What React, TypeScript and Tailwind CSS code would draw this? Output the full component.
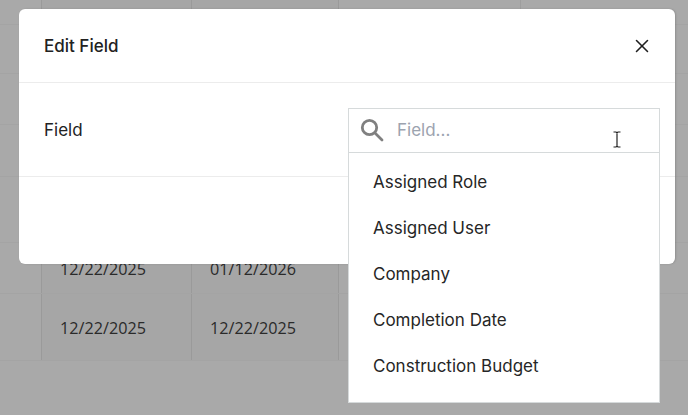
import { X } from 'lucide-react';

const font = "font-['Inter',sans-serif]";

const rows = [
  { h: 'h-[25px]', a: '', b: '' },
  { h: 'h-[49px]', a: '', b: '' },
  { h: 'h-[51px]', a: '', b: '' },
  { h: 'h-[52px]', a: '', b: '' },
  { h: 'h-[66px]', a: '', b: '' },
  { h: 'h-[51px]', a: '12/22/2025', b: '01/12/2026' },
  { h: 'h-[67px]', a: '12/22/2025', b: '12/22/2025' },
];

const options = ['Assigned Role', 'Assigned User', 'Company', 'Completion Date', 'Construction Budget'];

export default function App() {
  return (
    <div className="relative h-[415px] w-[688px] overflow-hidden bg-[#a9a9a9]">
      {/* table behind the overlay */}
      <div className="font-['Open_Sans',sans-serif] text-[16.2px] text-[#2a2a2a]">
        {rows.map((row, index) => (
          <div key={index} className={`flex ${row.h} border-b border-[#a4a4a4]`}>
            <div className="w-[42px] border-r border-[#9a9a9a]" />
            <div className="flex w-[150px] items-center border-r border-[#9a9a9a] bg-[#a6a6a6] pl-[18px] pt-[3px]">{row.a}</div>
            <div className="flex w-[147px] items-center border-r border-[#9a9a9a] bg-[#a6a6a6] pl-[18px] pt-[3px]">{row.b}</div>
            <div className="w-[182px] border-r border-[#9e9e9e]" />
          </div>
        ))}
      </div>

      {/* modal */}
      <div className={`absolute left-[19px] top-[9px] flex h-[255px] w-[656px] flex-col rounded-md bg-white shadow-[1px_0_2px_rgba(0,0,0,0.15)] ${font} text-[#222]`}>
        <div className="flex h-[74px] items-center justify-between border-b border-[#ececec] pl-[25px] pr-[22px]">
          <span className="pt-[2px] text-[17px] font-medium">Edit Field</span>
          <X size={22} strokeWidth={1.7} className="text-[#1f1f1f]" />
        </div>
        <div className="flex h-[94px] items-center border-b border-[#ececec] pl-[25px]">
          <span className="pt-[2px] text-[17px]">Field</span>
        </div>
      </div>

      {/* open select */}
      <div className={`absolute left-[348px] top-[108px] flex w-[312px] flex-col border border-[#d6dadb] bg-white ${font}`}>
        <div className="relative flex h-[44px] items-center gap-[13px] border-b border-[#d6dadb] pl-[11px]">
          <svg width="24" height="24" viewBox="0 0 24 24" fill="none" stroke="#808080" strokeWidth="2.8" strokeLinecap="round" className="-mt-[2px]">
            <circle cx="9.5" cy="9.5" r="7.2" />
            <path d="M15 15l7 7" />
          </svg>
          <span className="text-[17px] text-[#9ca3af]">Field...</span>
          <svg className="absolute left-[262px] top-[22px]" width="12" height="17" viewBox="0 0 12 17" fill="none" stroke="#222" strokeWidth="1.2">
            <path d="M2.5 1h2.5l1 .8 1-.8h2.5M6 1.8v13.4M2.5 16h2.5l1-.8 1 .8h2.5" />
          </svg>
        </div>
        <div className="flex flex-col pt-[7px] pb-[12px]">
          {options.map((option) => (
            <div key={option} className="flex h-[46px] items-center pl-[24px] text-[17px] text-[#262626]">
              {option}
            </div>
          ))}
        </div>
      </div>
    </div>
  );
}
